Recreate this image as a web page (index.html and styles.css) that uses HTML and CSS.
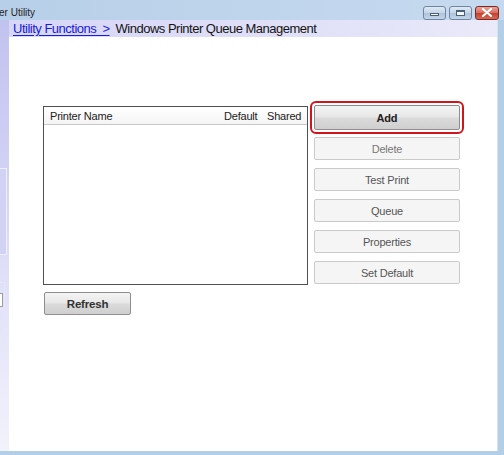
FILE: index.html
```html
<!DOCTYPE html>
<html>
<head>
<meta charset="utf-8">
<link rel="stylesheet" href="styles.css">
</head>
<body>
<div class="window">
  <div class="titlebar">
    <span class="title">er Utility</span>
    <div class="winbtns">
      <span class="wb wb-min"><span class="min-glyph"></span></span>
      <span class="wb wb-max"><span class="max-glyph"></span></span>
      <span class="wb wb-close"><svg width="12" height="9" viewBox="0 0 12 9"><path d="M2 1 L10 8 M10 1 L2 8" stroke="#fff" stroke-width="2.2" stroke-linecap="round"/></svg></span>
    </div>
  </div>
  <div class="main">
    <div class="leftstrip">
      <div class="ls-box"></div>
      <div class="ls-group"><div class="ls-input"></div></div>
    </div>
    <div class="content">
      <div class="breadcrumb">
        <a class="crumb-link">Utility Functions&nbsp; &gt;</a>
        <span class="crumb-current">Windows Printer Queue Management</span>
      </div>
      <div class="panel">
        <div class="leftcol">
          <div class="listbox">
            <div class="list-header">
              <span class="col-name">Printer Name</span>
              <span class="col-default">Default</span>
              <span class="col-shared">Shared</span>
            </div>
          </div>
          <button class="btn btn-active btn-refresh">Refresh</button>
        </div>
        <div class="btncol">
          <button class="btn btn-active btn-add">Add</button>
          <button class="btn btn-disabled btn-light">Delete</button>
          <button class="btn btn-disabled">Test Print</button>
          <button class="btn btn-disabled">Queue</button>
          <button class="btn btn-disabled">Properties</button>
          <button class="btn btn-disabled">Set Default</button>
        </div>
      </div>
    </div>
    <div class="rightborder"></div>
  </div>
  <div class="bottomborder"></div>
</div>
</body>
</html>
```

FILE: styles.css
```css
* { box-sizing: border-box; }
html, body { margin: 0; padding: 0; }
body {
  width: 504px;
  height: 455px;
  overflow: hidden;
  font-family: "Liberation Sans", Arial, sans-serif;
  background: #fff;
}
.window {
  display: flex;
  flex-direction: column;
  width: 504px;
  height: 455px;
}
.titlebar {
  height: 20px;
  flex: none;
  display: flex;
  align-items: center;
  justify-content: space-between;
  background: linear-gradient(90deg, #b7cfe8 0%, #bfd5ec 50%, #c6daef 100%);
}
.title {
  font-size: 10px;
  color: #1e1e1e;
  margin-top: 4px;
  margin-left: -1px;
}
.winbtns {
  display: flex;
  gap: 3px;
  margin-right: 5px;
  margin-top: 5px;
}
.wb {
  width: 23px;
  height: 14px;
  border: 1px solid #6f86a3;
  border-radius: 3px;
  display: flex;
  align-items: center;
  justify-content: center;
  background: linear-gradient(180deg, #dfe9f4 0%, #c4d4e6 50%, #aec2d9 51%, #c3d5e8 100%);
}
.wb-close {
  width: 24px;
  border-color: #7b2a25;
  background: linear-gradient(180deg, #e8a59c 0%, #d7685b 50%, #c2412f 51%, #d66a55 100%);
}
.min-glyph {
  width: 9px;
  height: 3px;
  margin-top: 4px;
  background: #f4f7fb;
  border: 1px solid #4a5f78;
}
.max-glyph {
  width: 9px;
  height: 6px;
  background: #f4f7fb;
  border: 1px solid #4a5f78;
  border-top-width: 2px;
}
.main {
  flex: 1;
  display: flex;
  min-height: 0;
}
.leftstrip {
  width: 9px;
  flex: none;
  display: flex;
  flex-direction: column;
  background: linear-gradient(180deg, #c2c2f0 0%, #cfcff5 30%, #e0e0f9 60%, #f2f2fc 100%);
}
.ls-box {
  margin-top: 148px;
  height: 87px;
  width: 7px;
  border: 1px solid #eeeefc;
  border-left: none;
  background: #d2d2f5;
}
.ls-group {
  margin-top: 27px;
  height: 68px;
  width: 5px;
  border: 1px solid #e6e6f7;
  border-left: none;
  padding-top: 10px;
}
.ls-input {
  width: 3px;
  height: 14px;
  background: #fff;
  border: 1px solid #9a9aa8;
  border-left: none;
}
.content {
  flex: 1;
  display: flex;
  flex-direction: column;
  min-width: 0;
}
.breadcrumb {
  height: 17px;
  flex: none;
  display: flex;
  align-items: flex-end;
  gap: 6px;
  padding-left: 4px;
  background: linear-gradient(90deg, #d6d6f7 0%, #e0e0f8 60%, #eaeafa 100%);
  font-size: 13px;
  letter-spacing: -0.5px;
  line-height: 16px;
}
.crumb-link {
  color: #1a1ae0;
  text-decoration: underline;
  text-underline-offset: 2px;
}
.crumb-current {
  color: #141414;
}
.panel {
  flex: 1;
  display: flex;
  gap: 6px;
  padding-top: 69px;
  padding-left: 34px;
  background: #fff;
}
.leftcol {
  display: flex;
  flex-direction: column;
  align-items: flex-start;
}
.listbox {
  width: 265px;
  height: 179px;
  border: 1px solid #505050;
  background: #fff;
}
.list-header {
  height: 18px;
  display: flex;
  align-items: center;
  font-size: 11px;
  letter-spacing: -0.2px;
  color: #222;
  border-bottom: 1px solid #c9c9c9;
  background: linear-gradient(180deg, #ffffff 0%, #f4f4f4 100%);
  padding-left: 6px;
}
.col-name { flex: 1; }
.col-default { width: 43px; }
.col-shared { width: 40px; }
.btn {
  font-family: "Liberation Sans", Arial, sans-serif;
  font-size: 11px;
  letter-spacing: -0.2px;
  height: 23px;
  border-radius: 2px;
  padding: 0;
  display: flex;
  align-items: center;
  justify-content: center;
}
.btn-active {
  border: 1px solid #8e8e8e;
  background: linear-gradient(180deg, #f4f4f4 0%, #e8e8e8 45%, #dadada 55%, #cfcfcf 100%);
  color: #222;
  font-weight: bold;
}
.btn-refresh {
  margin-top: 7px;
  margin-left: 1px;
  width: 87px;
  font-size: 11.5px;
  color: #333;
}
.btncol {
  display: flex;
  flex-direction: column;
  gap: 8px;
  width: 146px;
  margin-top: -1px;
}
.btn-add {
  height: 25px;
  width: 146px;
  outline: 2px solid #d2141c;
  outline-offset: 2px;
  margin-bottom: -1px;
}
.btn-disabled {
  width: 146px;
  border: 1px solid #cacaca;
  background: #f5f5f5;
  color: #555;
}
.btn-light {
  color: #777;
}
.rightborder {
  width: 7px;
  flex: none;
  background: #b3cfe7;
  border-left: 1px solid #d6e4f1;
}
.bottomborder {
  height: 4px;
  flex: none;
  background: #b3cfe7;
}
```
